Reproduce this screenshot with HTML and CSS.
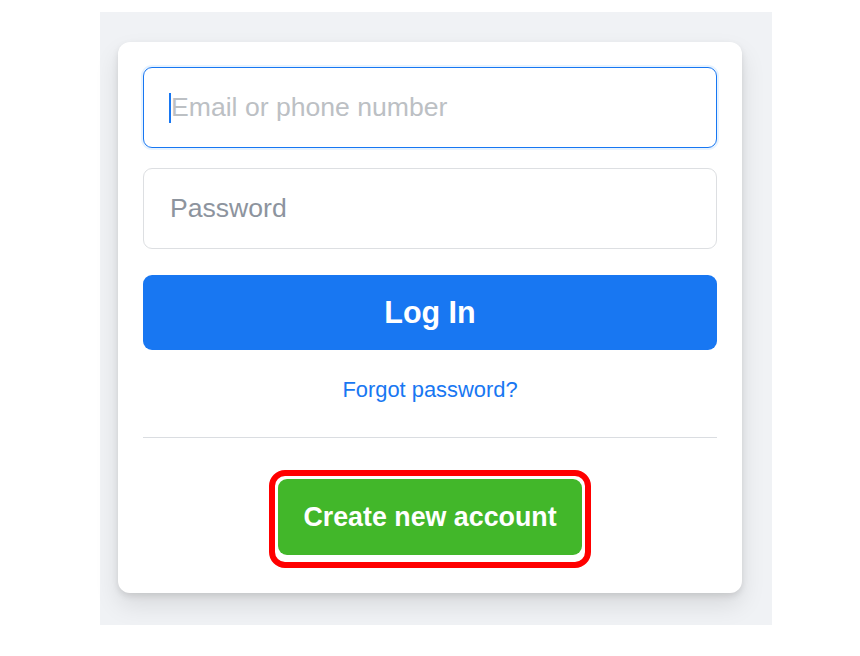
FILE: index.html
```html
<!DOCTYPE html>
<html lang="en">
<head>
<meta charset="utf-8">
<title>Log In</title>
<link rel="stylesheet" href="styles.css">
</head>
<body>
<div class="stage">
  <form class="card">
    <div class="field focused">
      <span class="caret"></span>
      <span class="placeholder light">Email or phone number</span>
    </div>
    <div class="field">
      <span class="placeholder">Password</span>
    </div>
    <button type="button" class="login">Log In</button>
    <div class="forgot"><a href="#">Forgot password?</a></div>
    <div class="divider"></div>
    <div class="create-row">
      <span class="highlight"><button type="button" class="create">Create new account</button></span>
    </div>
  </form>
</div>
</body>
</html>
```

FILE: styles.css
```css
* { box-sizing: border-box; }
html, body { margin: 0; padding: 0; background: #ffffff; }
body { font-family: "Liberation Sans", Arial, Helvetica, sans-serif; }

.stage {
  margin: 12px 0 0 100px;
  width: 672px;
  height: 613px;
  background: #f0f2f5;
  padding: 30px 0 0 18px;
}

.card {
  width: 624px;
  height: 551px;
  background: #ffffff;
  border-radius: 12px;
  box-shadow: 0 3px 6px rgba(0, 0, 0, 0.1), 0 12px 24px rgba(0, 0, 0, 0.1);
  padding: 25px;
  display: flex;
  flex-direction: column;
}

.field {
  position: relative;
  height: 81px;
  border: 1px solid #dddfe2;
  border-radius: 9px;
  padding-left: 26px;
  display: flex;
  align-items: center;
  font-size: 26.6px;
  color: #8d949e;
}
.field + .field { margin-top: 20px; }
.field.focused {
  border-color: #1877f2;
  box-shadow: 0 0 0 2px #e7f3ff;
}
.placeholder { padding-left: 0; }
.placeholder.light { color: #bcc0c4; padding-left: 1px; }
.caret {
  position: absolute;
  left: 25px;
  top: 25px;
  width: 2px;
  height: 30px;
  background: #1877f2;
}

.login {
  margin-top: 26px;
  height: 75px;
  border: none;
  border-radius: 9px;
  background: #1877f2;
  color: #ffffff;
  font-family: inherit;
  font-weight: bold;
  font-size: 30.5px;
  padding: 0;
}

.forgot {
  margin-top: 25px;
  height: 30px;
  line-height: 30px;
  text-align: center;
  font-size: 21.9px;
}
.forgot a { color: #1877f2; text-decoration: none; }

.divider {
  margin-top: 32px;
  height: 1px;
  background: #dadde1;
}

.create-row {
  margin-top: 32px;
  display: flex;
  justify-content: center;
}
.highlight {
  display: flex;
  border: 6px solid #ff0000;
  border-radius: 16px;
  padding: 3px 3px 7px 3px;
}
.create {
  height: 76px;
  width: 304px;
  border: none;
  border-radius: 9px;
  background: #42b72a;
  color: #ffffff;
  font-family: inherit;
  font-weight: bold;
  font-size: 26.8px;
  padding: 0;
}
```
